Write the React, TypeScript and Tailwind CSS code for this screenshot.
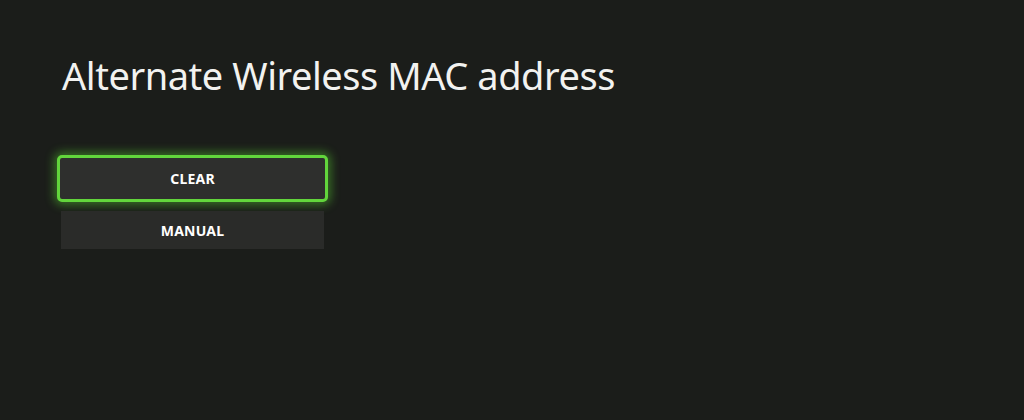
export default function App() {
  return (
    <div className="w-[1024px] h-[420px] bg-[#1b1d1a] overflow-hidden" style={{ fontFamily: '"Noto Sans", "Liberation Sans", sans-serif' }}>
      <div className="pl-[62px] pt-[50px]">
        <h1 className="text-[38px] leading-[50px] text-[#f2f2f0] tracking-[-0.45px]">Alternate Wireless MAC address</h1>
        <div className="mt-[55px] -ml-[5px] flex flex-col w-[271px]">
          <button className="h-[47px] rounded-[5px] border-[3px] border-[#62d53c] bg-[#2e2f2d] shadow-[0_0_10px_3px_rgba(90,210,50,0.45)] text-[14px] font-bold text-white tracking-[0.2px]">
            CLEAR
          </button>
          <button className="mt-[9px] mx-[4px] h-[38px] bg-[#2a2b29] text-[14px] font-bold text-white tracking-[0.2px]">
            MANUAL
          </button>
        </div>
      </div>
    </div>
  );
}
